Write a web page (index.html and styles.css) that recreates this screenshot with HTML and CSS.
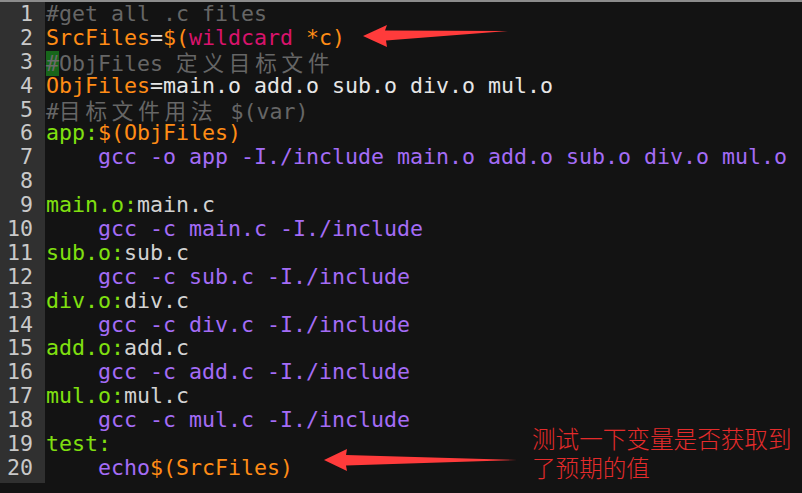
FILE: index.html
```html
<!DOCTYPE html>
<html>
<head>
<meta charset="utf-8">
<link rel="stylesheet" href="styles.css">
</head>
<body>
<div class="editor">
  <div class="gutter">
    <div class="ln">1</div><div class="ln">2</div><div class="ln">3</div><div class="ln">4</div><div class="ln">5</div>
    <div class="ln">6</div><div class="ln">7</div><div class="ln">8</div><div class="ln">9</div><div class="ln">10</div>
    <div class="ln">11</div><div class="ln">12</div><div class="ln">13</div><div class="ln">14</div><div class="ln">15</div>
    <div class="ln">16</div><div class="ln">17</div><div class="ln">18</div><div class="ln">19</div><div class="ln">20</div>
  </div>
  <div class="code">
    <div class="line"><span class="cm">#get all .c files</span></div>
    <div class="line"><span class="or">SrcFiles</span><span class="wh">=</span><span class="or">$(</span><span class="mg">wildcard</span><span class="or"> *c)</span></div>
    <div class="line"><span class="cm"><span class="hl">#</span>ObjFiles <span class="cjk">定义目标文件</span></span></div>
    <div class="line"><span class="or">ObjFiles</span><span class="wh">=main.o add.o sub.o div.o mul.o</span></div>
    <div class="line"><span class="cm">#<span class="cjk">目标文件用法</span> $(var)</span></div>
    <div class="line"><span class="gr">app:</span><span class="or">$(ObjFiles)</span></div>
    <div class="line"><span class="pu">    gcc -o app -I./include main.o add.o sub.o div.o mul.o</span></div>
    <div class="line"></div>
    <div class="line"><span class="gr">main.o:</span><span class="pl">main.c</span></div>
    <div class="line"><span class="pu">    gcc -c main.c -I./include</span></div>
    <div class="line"><span class="gr">sub.o:</span><span class="pl">sub.c</span></div>
    <div class="line"><span class="pu">    gcc -c sub.c -I./include</span></div>
    <div class="line"><span class="gr">div.o:</span><span class="pl">div.c</span></div>
    <div class="line"><span class="pu">    gcc -c div.c -I./include</span></div>
    <div class="line"><span class="gr">add.o:</span><span class="pl">add.c</span></div>
    <div class="line"><span class="pu">    gcc -c add.c -I./include</span></div>
    <div class="line"><span class="gr">mul.o:</span><span class="pl">mul.c</span></div>
    <div class="line"><span class="pu">    gcc -c mul.c -I./include</span></div>
    <div class="line"><span class="gr">test:</span></div>
    <div class="line"><span class="pu">    echo</span><span class="or">$(SrcFiles)</span></div>
  </div>
</div>
<svg class="arrows" width="802" height="493" viewBox="0 0 802 493">
  <polygon points="363,36 387,25 385,30.5 508,31 386,40.5 387,47" fill="#ff3b3b"/>
  <polygon points="324,460 347,449 346,455 517,460 346,465.5 347,471" fill="#ff3b3b"/>
</svg>
<div class="note">测试一下变量是否获取到<br>了预期的值</div>
</body>
</html>
```

FILE: styles.css
```css
html, body {
  margin: 0;
  padding: 0;
  background: #131313;
  width: 802px;
  height: 493px;
  overflow: hidden;
}
body {
  position: relative;
  font-family: "DejaVu Sans Mono", "Noto Sans CJK SC", monospace;
  font-size: 21.6px;
}
.editor {
  display: flex;
  align-items: flex-start;
  border-top: 2px solid #8c8c8c;
}
.gutter {
  width: 45px;
  box-sizing: border-box;
  padding-right: 12px;
  padding-bottom: 3px;
  background: #303030;
  color: #c9c9c9;
  text-align: right;
}
.ln, .line {
  height: 23.9px;
  line-height: 23.9px;
  white-space: pre;
}
.code {
  padding-left: 1px;
}
.cjk {
  font-family: "Noto Sans CJK SC", sans-serif;
  letter-spacing: 4.8px;
}
.cm { color: #666666; }
.hl { background: #17661a; color: #6a6a6a; }
.or { color: #ff8c16; }
.mg { color: #d8136c; }
.wh { color: #e6e6e6; }
.pl { color: #d2d2d2; }
.gr { color: #80e010; }
.pu { color: #a46cf6; }
.arrows {
  position: absolute;
  left: 0;
  top: 0;
}
.note {
  position: absolute;
  left: 532px;
  top: 424px;
  font-family: "Noto Sans CJK SC", sans-serif;
  font-weight: 300;
  font-size: 23.6px;
  line-height: 29px;
  color: #e42b2b;
}
```
